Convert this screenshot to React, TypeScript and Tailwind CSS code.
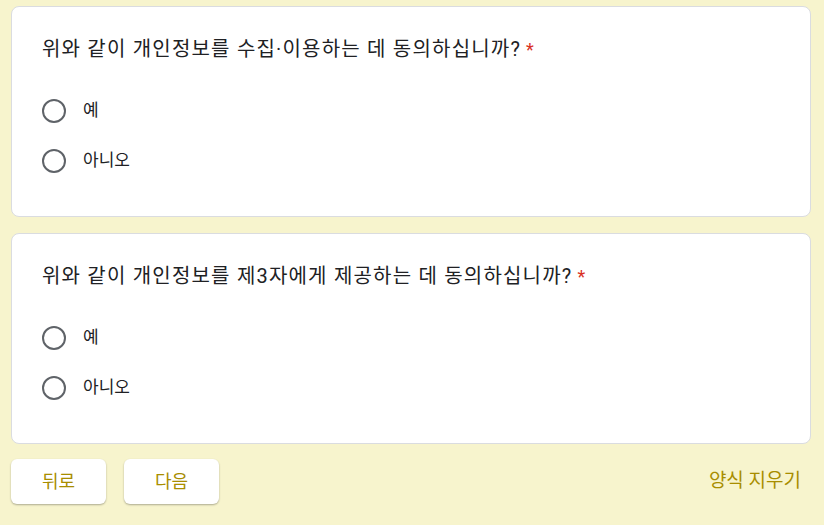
import React from 'react';

const font = { fontFamily: 'Roboto, "Noto Sans CJK KR", sans-serif' };

const Radio = ({ label }: { label: string }) => (
  <div className="flex items-center h-[50px]">
    <div className="w-6 h-6 rounded-full border-2 border-[#5f6368]" />
    <span className="ml-[17px] text-[17px] text-[#202124]">{label}</span>
  </div>
);

const QuestionCard = ({ title }: { title: string }) => (
  <div className="bg-white rounded-lg border border-[#dadce0] h-[211px] px-[30px] pt-[30px]">
    <div className="text-[20px] leading-6 tracking-[1.2px] text-[#202124]">
      {title}
      <span className="text-[#d93025] ml-[5px] text-[18px]">*</span>
    </div>
    <div className="mt-[24px]">
      <Radio label="예" />
      <Radio label="아니오" />
    </div>
  </div>
);

export default function App() {
  return (
    <div className="w-[824px] h-[525px] bg-[#f7f4cd] overflow-hidden" style={font}>
      <div className="ml-[11px] w-[800px] pt-[6px] flex flex-col">
        <QuestionCard title="위와 같이 개인정보를 수집·이용하는 데 동의하십니까?" />
        <div className="h-4" />
        <QuestionCard title="위와 같이 개인정보를 제3자에게 제공하는 데 동의하십니까?" />
        <div className="flex items-center mt-[15px]">
          <button className="w-[95px] h-[45px] bg-white rounded-md shadow-[0_1px_2px_rgba(0,0,0,0.3)] text-[18px] text-[#a88d00]">
            뒤로
          </button>
          <button className="ml-[18px] w-[95px] h-[45px] bg-white rounded-md shadow-[0_1px_2px_rgba(0,0,0,0.3)] text-[18px] text-[#a88d00]">
            다음
          </button>
          <span className="ml-auto mr-[10px] text-[19px] text-[#a88d00]">양식 지우기</span>
        </div>
      </div>
    </div>
  );
}
